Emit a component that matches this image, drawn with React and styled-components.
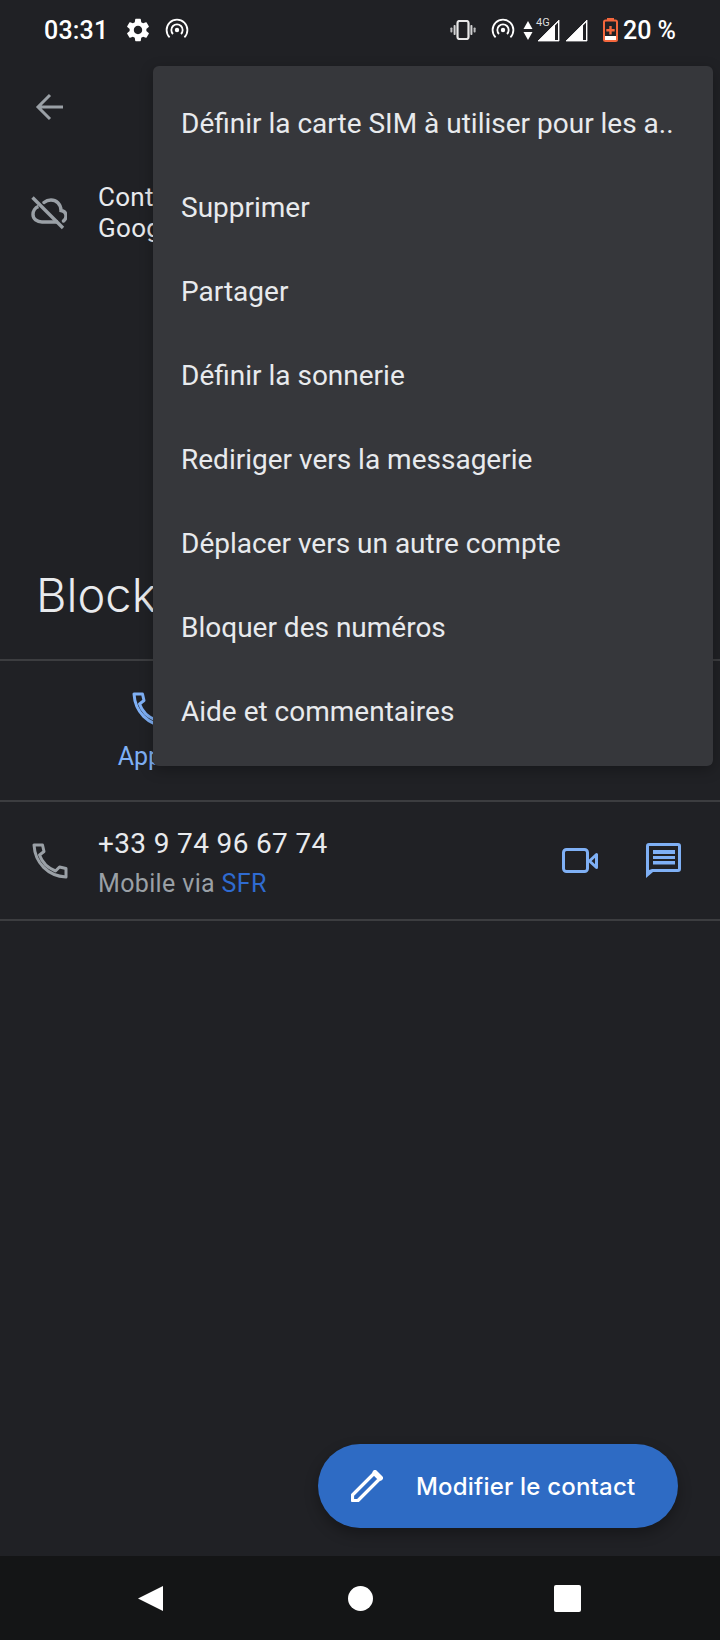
import React from 'react'
import styled, { createGlobalStyle } from 'styled-components'

const GlobalStyle = createGlobalStyle`
  html, body { margin: 0; padding: 0; background: #202125; }
  body { font-family: Roboto, "Liberation Sans", sans-serif; }
`

const Screen = styled.div`
  position: relative;
  width: 720px;
  height: 1640px;
  overflow: hidden;
  display: flex;
  flex-direction: column;
  background: #202125;
  color: #e8eaed;
`

const StatusBar = styled.div`
  height: 60px;
  flex: none;
  display: flex;
  align-items: center;
  justify-content: space-between;
  padding: 0 44px;
  color: #fff;
`

const StatusGroup = styled.div`
  display: flex;
  align-items: center;
  gap: ${p => p.$gap || 0}px;
`

const Time = styled.span`
  font-size: 25px;
  font-weight: 500;
  margin-right: 3px;
  letter-spacing: 0.2px;
`

const Percent = styled.span`
  font-size: 25px;
  font-weight: 500;
  margin-left: 5px;
`

const FourG = styled.span`
  font-size: 11px;
  line-height: 11px;
  align-self: flex-start;
  margin: 1px 0 0 3px;
  width: 12px;
  flex: none;
  color: #ddd;
`

const Glyph = styled.svg`
  display: block;
  flex: none;
  margin-left: ${p => p.$ml || 0}px;
  fill: currentColor;
`

const Toolbar = styled.div`
  height: 94px;
  flex: none;
  display: flex;
  align-items: center;
  padding-left: 35px;
  color: #9aa0a6;
`

const AccountRow = styled.div`
  display: flex;
  align-items: center;
  gap: 31px;
  padding: 28px 0 0 31px;
  color: #9aa0a6;
`

const AccountText = styled.div`
  font-size: 26px;
  line-height: 31px;
  color: #e8eaed;
  letter-spacing: 0.3px;
`

const Name = styled.h1`
  margin: 323px 0 36px 36px;
  font-family: Inter, Roboto, sans-serif;
  font-size: 47px;
  line-height: 56px;
  font-weight: 350;
  color: #e8eaed;
`

const Divider = styled.div`
  height: 2px;
  flex: none;
  background: #3c3d40;
`

const Actions = styled.div`
  height: 139px;
  flex: none;
  width: 299px;
  display: flex;
  flex-direction: column;
  align-items: center;
  color: #7fb0f5;
  padding-top: 31px;
  box-sizing: border-box;
`

const ActionLabel = styled.span`
  font-size: 25px;
  line-height: 30px;
  margin-top: 14px;
`

const ContactRow = styled.div`
  height: 117px;
  flex: none;
  display: flex;
  align-items: center;
  padding: 0 38px 0 32px;
  box-sizing: border-box;
`

const RowIcon = styled.div`
  color: #9aa0a6;
  margin-right: 30px;
`

const RowText = styled.div`
  flex: 1;
  padding-top: 4px;
`

const PhoneNumber = styled.div`
  font-size: 28px;
  line-height: 36px;
  color: #e8eaed;
  letter-spacing: 0.35px;
`

const PhoneType = styled.div`
  font-size: 25px;
  line-height: 32px;
  margin-top: 6px;
  color: #9aa0a6;
  letter-spacing: 0.35px;
`

const Carrier = styled.span`
  color: #2f6bd0;
`

const RowActions = styled.div`
  display: flex;
  align-items: center;
  gap: 48px;
  color: #7fb0f5;
`

const Spacer = styled.div`
  flex: 1;
`

const NavBar = styled.div`
  height: 84px;
  flex: none;
  display: flex;
  align-items: center;
  justify-content: space-between;
  padding: 0 139px 0 137px;
  background: #141516;
  color: #fff;
`

const NavCircle = styled.div`
  width: 25px;
  height: 25px;
  margin-left: 2px;
  border-radius: 50%;
  background: #fff;
`

const NavSquare = styled.div`
  width: 27px;
  height: 27px;
  border-radius: 2px;
  background: #fff;
`

const Menu = styled.div`
  position: absolute;
  top: 66px;
  left: 153px;
  width: 560px;
  height: 700px;
  box-sizing: border-box;
  padding-top: 15px;
  background: #36373b;
  border-radius: 6px;
  box-shadow: 0 4px 14px rgba(0, 0, 0, 0.28);
`

const MenuItem = styled.div`
  height: 84px;
  display: flex;
  align-items: center;
  padding-left: 28px;
  font-size: 28px;
  color: #e8eaed;
  white-space: nowrap;
`

const Fab = styled.button`
  position: absolute;
  left: 318px;
  top: 1444px;
  width: 360px;
  height: 84px;
  border: none;
  border-radius: 42px;
  padding: 0 0 0 33px;
  display: flex;
  align-items: center;
  gap: 33px;
  background: #2e6bc4;
  color: #fff;
  font-family: Inter, Roboto, sans-serif;
  font-size: 24px;
  font-weight: 500;
  letter-spacing: 0.2px;
  box-shadow: 0 6px 14px rgba(0, 0, 0, 0.3);
`

const menuItems = [
  'Définir la carte SIM à utiliser pour les a..',
  'Supprimer',
  'Partager',
  'Définir la sonnerie',
  'Rediriger vers la messagerie',
  'Déplacer vers un autre compte',
  'Bloquer des numéros',
  'Aide et commentaires',
]

const PhoneIcon = () => (
  <Glyph width="36" height="36" viewBox="0 0 36 36">
    <path
      d="M2 2H10.5L12 8.5L7.5 12C10 19 16 25 23.5 28L27.5 24L34 25.5V34C16 33 3 20 2 2Z"
      fill="none"
      stroke="currentColor"
      strokeWidth="3"
      strokeLinejoin="round"
    />
  </Glyph>
)

const Hotspot = ({ ml }) => (
  <Glyph $ml={ml} width="24" height="24" viewBox="0 0 24 24">
    <circle cx="12" cy="12" r="2.2" />
    <path d="M8 16A5.66 5.66 0 1 1 16 16" fill="none" stroke="currentColor" strokeWidth="1.8" />
    <path d="M4.6 19.4A10.4 10.4 0 1 1 19.4 19.4" fill="none" stroke="currentColor" strokeWidth="1.8" />
  </Glyph>
)

const Signal = ({ ml }) => (
  <Glyph $ml={ml} width="23" height="23" viewBox="0 0 23 23">
    <path d="M22 1v21H1z M21 3.4L18 6.4V21h3z" fillRule="evenodd" />
    <path d="M22 1v21H1z" fill="none" stroke="currentColor" strokeWidth="0.8" />
  </Glyph>
)

const StatusIcons = () => (
  <StatusGroup>
    <Glyph width="26" height="20" viewBox="0 0 26 20">
      <rect x="7.5" y="1" width="11" height="18" rx="2" fill="none" stroke="currentColor" strokeWidth="2.2" opacity="0.9" />
      <rect x="3.6" y="5" width="2" height="10" rx="0.8" opacity="0.8" />
      <rect x="20.4" y="5" width="2" height="10" rx="0.8" opacity="0.8" />
      <rect x="0.4" y="7.5" width="2" height="5" rx="0.8" opacity="0.7" />
      <rect x="23.6" y="7.5" width="2" height="5" rx="0.8" opacity="0.7" />
    </Glyph>
    <Hotspot ml={15} />
    <Glyph $ml={8} width="10" height="19" viewBox="0 0 10 19">
      <path d="M5 0l4.5 8H.5zM5 19L.5 11h9z" />
    </Glyph>
    <FourG>4G</FourG>
    <Signal ml={-11} />
    <Signal ml={5} />
    <Glyph $ml={15} width="15" height="24" viewBox="0 0 15 24">
      <rect x="4" y="0" width="7" height="3" fill="#f4673d" />
      <rect x="1" y="2.5" width="13" height="20.5" rx="1.5" fill="none" stroke="#f4673d" strokeWidth="2" />
      <rect x="2" y="18" width="11" height="4" fill="#fff" />
      <path d="M6.3 8h2.4v3h3v2.4h-3v3H6.3v-3h-3V11h3z" fill="#f4673d" />
    </Glyph>
    <Percent>20 %</Percent>
  </StatusGroup>
)

const Gear = () => (
  <Glyph width="28" height="28" viewBox="0 0 24 24">
    <path d="M19.14 12.94c.04-.3.06-.61.06-.94 0-.32-.02-.64-.07-.94l2.03-1.58c.18-.14.23-.41.12-.61l-1.92-3.32c-.12-.22-.37-.29-.59-.22l-2.39.96c-.5-.38-1.03-.7-1.62-.94l-.36-2.54c-.04-.24-.24-.41-.48-.41h-3.84c-.24 0-.43.17-.47.41l-.36 2.54c-.59.24-1.13.57-1.62.94l-2.39-.96c-.22-.08-.47 0-.59.22L2.74 8.87c-.12.21-.08.47.12.61l2.03 1.58c-.05.3-.09.63-.09.94s.02.64.07.94l-2.03 1.58c-.18.14-.23.41-.12.61l1.92 3.32c.12.22.37.29.59.22l2.39-.96c.5.38 1.03.7 1.62.94l.36 2.54c.05.24.24.41.48.41h3.84c.24 0 .44-.17.47-.41l.36-2.54c.59-.24 1.13-.56 1.62-.94l2.39.96c.22.08.47 0 .59-.22l1.92-3.32c.12-.22.07-.47-.12-.61l-2.01-1.58zM12 15.6c-1.98 0-3.6-1.62-3.6-3.6s1.62-3.6 3.6-3.6 3.6 1.62 3.6 3.6-1.62 3.6-3.6 3.6z" />
  </Glyph>
)

export default function App() {
  return (
    <>
      <GlobalStyle />
      <Screen>
        <StatusBar>
          <StatusGroup $gap={13}>
            <Time>03:31</Time>
            <Gear />
            <Hotspot />
          </StatusGroup>
          <StatusIcons />
        </StatusBar>
        <Toolbar>
          <Glyph width="30" height="30" viewBox="0 0 30 30">
            <path d="M28 15H4M15 3L3 15l12 12" fill="none" stroke="currentColor" strokeWidth="3" />
          </Glyph>
        </Toolbar>
        <AccountRow>
          <Glyph width="36" height="34" viewBox="0 0 36 34">
            <g fill="none" stroke="currentColor" strokeWidth="3.4">
              <path d="M13 6.500C15 4.800 17 4 20 4C25 4 30 8 30 14.500C33 15 35 17 35 20C35 22 34 24 32.500 25" strokeLinecap="round" />
              <path d="M7.500 10.500C4 11.500 2 15 2 18.500C2 23 6 26 11 26H27" />
              <path d="M1.500 1.500L32 32" />
            </g>
          </Glyph>
          <AccountText>Contact<br />Google</AccountText>
        </AccountRow>
        <Name>Block</Name>
        <Divider />
        <Actions>
          <PhoneIcon />
          <ActionLabel>Appel</ActionLabel>
        </Actions>
        <Divider />
        <ContactRow>
          <RowIcon><PhoneIcon /></RowIcon>
          <RowText>
            <PhoneNumber>+33 9 74 96 67 74</PhoneNumber>
            <PhoneType>Mobile via <Carrier>SFR</Carrier></PhoneType>
          </RowText>
          <RowActions>
            <Glyph width="36" height="26" viewBox="0 0 36 26">
              <rect x="1.500" y="1.500" width="24" height="22" rx="3" fill="none" stroke="currentColor" strokeWidth="3" />
              <path d="M27.500 13L34.500 6.500V19.500Z" fill="none" stroke="currentColor" strokeWidth="3" strokeLinejoin="round" />
            </Glyph>
            <Glyph width="36" height="36" viewBox="0 0 36 36">
              <path d="M3 0H32a3 3 0 0 1 3 3V26a3 3 0 0 1-3 3H7L0 35V3a3 3 0 0 1 3-3zM3 3V27L6 26H32V3z" fillRule="evenodd" />
              <path d="M7 7H29V11H7zM7 13H29V16H7zM7 18H29V21.500H7z" />
            </Glyph>
          </RowActions>
        </ContactRow>
        <Divider />
        <Spacer />
        <NavBar>
          <Glyph width="27" height="27" viewBox="0 0 27 27">
            <path d="M26 1v25L1 13.500z" />
          </Glyph>
          <NavCircle />
          <NavSquare />
        </NavBar>
        <Menu>
          {menuItems.map(item => <MenuItem key={item}>{item}</MenuItem>)}
        </Menu>
        <Fab>
          <Glyph width="32" height="32" viewBox="0 0 32 32">
            <path d="M1.500 30.500V25L23 3.500L28.500 9L7 30.500Z" fill="none" stroke="currentColor" strokeWidth="3.200" strokeLinejoin="round" />
            <path d="M24 2.500L29.500 8" fill="none" stroke="currentColor" strokeWidth="5" strokeLinecap="round" />
          </Glyph>
          Modifier le contact
        </Fab>
      </Screen>
    </>
  )
}
